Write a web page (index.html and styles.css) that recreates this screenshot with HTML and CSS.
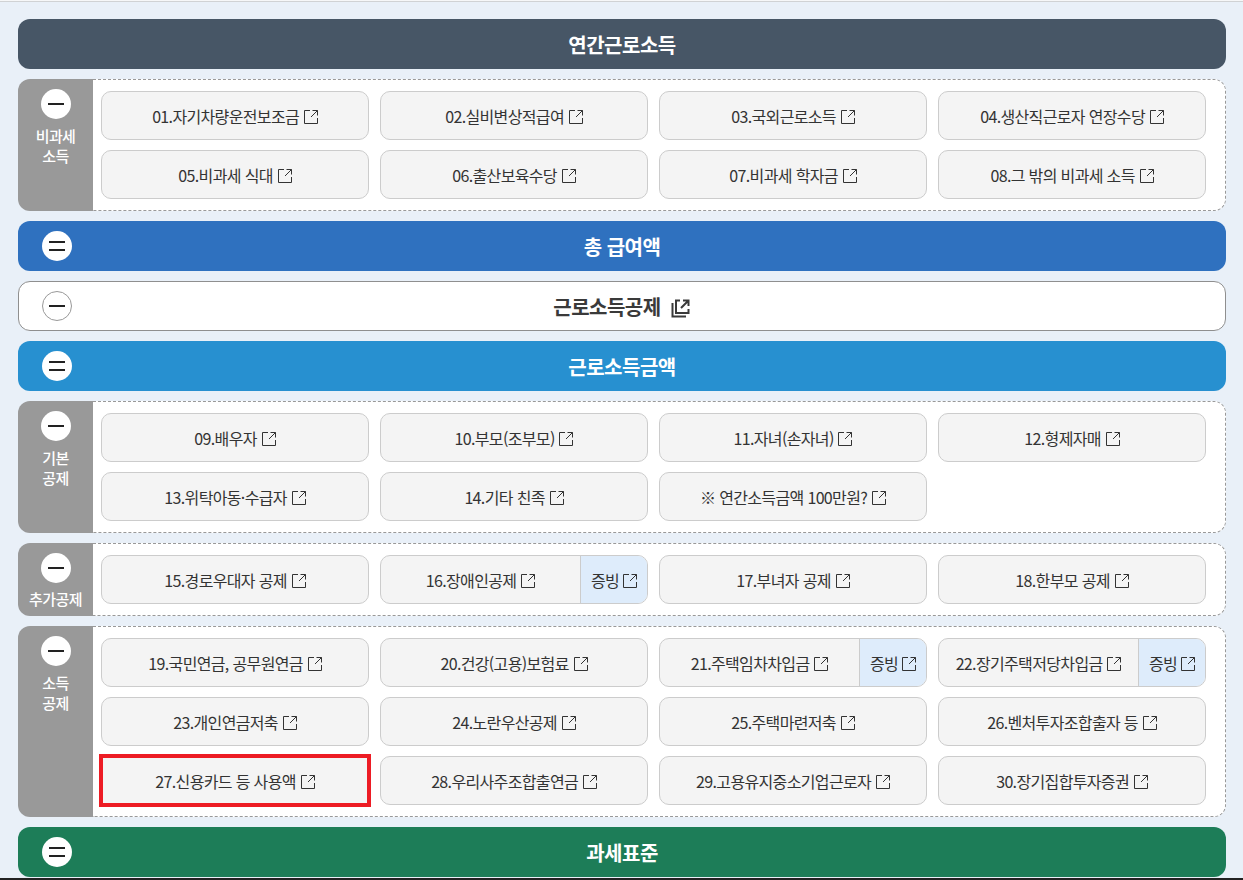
FILE: index.html
```html
<!DOCTYPE html>
<html lang="ko">
<head>
<meta charset="utf-8">
<title>연간근로소득</title>
<link rel="stylesheet" href="styles.css">
</head>
<body>
<svg class="defs" width="0" height="0" aria-hidden="true">
  <symbol id="ext" viewBox="0 0 14 14">
    <path d="M6 .5H.5V13.5H13.5V8M8.5 .5H13.5V5.5M13.5 .5L7 7" fill="none" stroke="currentColor" stroke-width="1"/>
  </symbol>
</svg>
<main class="page">
  <div class="bar bar-slate"><span class="bar-title">연간근로소득</span></div>

  <section class="box">
    <div class="side"><span class="circle minus"></span><span class="side-label">비과세<br>소득</span></div>
    <div class="grid">
      <a class="btn"><span class="lbl">01.자기차량운전보조금 <svg class="ico"><use href="#ext"/></svg></span></a>
      <a class="btn"><span class="lbl">02.실비변상적급여 <svg class="ico"><use href="#ext"/></svg></span></a>
      <a class="btn"><span class="lbl">03.국외근로소득 <svg class="ico"><use href="#ext"/></svg></span></a>
      <a class="btn"><span class="lbl">04.생산직근로자 연장수당 <svg class="ico"><use href="#ext"/></svg></span></a>
      <a class="btn"><span class="lbl">05.비과세 식대 <svg class="ico"><use href="#ext"/></svg></span></a>
      <a class="btn"><span class="lbl">06.출산보육수당 <svg class="ico"><use href="#ext"/></svg></span></a>
      <a class="btn"><span class="lbl">07.비과세 학자금 <svg class="ico"><use href="#ext"/></svg></span></a>
      <a class="btn"><span class="lbl">08.그 밖의 비과세 소득 <svg class="ico"><use href="#ext"/></svg></span></a>
    </div>
  </section>

  <div class="bar bar-blue"><span class="circle equal"></span><span class="bar-title">총 급여액</span></div>

  <div class="bar bar-white"><span class="circle minus outlined"></span><span class="bar-title">근로소득공제 <svg class="ico-bold" viewBox="0 0 20 20"><path d="M1.5 5V18.5H15" fill="none" stroke="currentColor" stroke-width="2"/><path d="M9 2.5H5V15H17.5V11M12 2.5H17.5V8M17.5 2.5L10 10" fill="none" stroke="currentColor" stroke-width="2"/></svg></span></div>

  <div class="bar bar-sky"><span class="circle equal"></span><span class="bar-title">근로소득금액</span></div>

  <section class="box">
    <div class="side"><span class="circle minus"></span><span class="side-label">기본<br>공제</span></div>
    <div class="grid">
      <a class="btn"><span class="lbl">09.배우자 <svg class="ico"><use href="#ext"/></svg></span></a>
      <a class="btn"><span class="lbl">10.부모(조부모) <svg class="ico"><use href="#ext"/></svg></span></a>
      <a class="btn"><span class="lbl">11.자녀(손자녀) <svg class="ico"><use href="#ext"/></svg></span></a>
      <a class="btn"><span class="lbl">12.형제자매 <svg class="ico"><use href="#ext"/></svg></span></a>
      <a class="btn"><span class="lbl">13.위탁아동·수급자 <svg class="ico"><use href="#ext"/></svg></span></a>
      <a class="btn"><span class="lbl">14.기타 친족 <svg class="ico"><use href="#ext"/></svg></span></a>
      <a class="btn"><span class="lbl">※ 연간소득금액 100만원? <svg class="ico"><use href="#ext"/></svg></span></a>
    </div>
  </section>

  <section class="box">
    <div class="side"><span class="circle minus"></span><span class="side-label side-label-single">추가공제</span></div>
    <div class="grid">
      <a class="btn"><span class="lbl">15.경로우대자 공제 <svg class="ico"><use href="#ext"/></svg></span></a>
      <a class="btn"><span class="lbl">16.장애인공제 <svg class="ico"><use href="#ext"/></svg></span><span class="proof">증빙 <svg class="ico"><use href="#ext"/></svg></span></a>
      <a class="btn"><span class="lbl">17.부녀자 공제 <svg class="ico"><use href="#ext"/></svg></span></a>
      <a class="btn"><span class="lbl">18.한부모 공제 <svg class="ico"><use href="#ext"/></svg></span></a>
    </div>
  </section>

  <section class="box">
    <div class="side"><span class="circle minus"></span><span class="side-label">소득<br>공제</span></div>
    <div class="grid">
      <a class="btn"><span class="lbl">19.국민연금, 공무원연금 <svg class="ico"><use href="#ext"/></svg></span></a>
      <a class="btn"><span class="lbl">20.건강(고용)보험료 <svg class="ico"><use href="#ext"/></svg></span></a>
      <a class="btn"><span class="lbl">21.주택임차차입금 <svg class="ico"><use href="#ext"/></svg></span><span class="proof">증빙 <svg class="ico"><use href="#ext"/></svg></span></a>
      <a class="btn"><span class="lbl">22.장기주택저당차입금 <svg class="ico"><use href="#ext"/></svg></span><span class="proof">증빙 <svg class="ico"><use href="#ext"/></svg></span></a>
      <a class="btn"><span class="lbl">23.개인연금저축 <svg class="ico"><use href="#ext"/></svg></span></a>
      <a class="btn"><span class="lbl">24.노란우산공제 <svg class="ico"><use href="#ext"/></svg></span></a>
      <a class="btn"><span class="lbl">25.주택마련저축 <svg class="ico"><use href="#ext"/></svg></span></a>
      <a class="btn"><span class="lbl">26.벤처투자조합출자 등 <svg class="ico"><use href="#ext"/></svg></span></a>
      <a class="btn btn-marked"><span class="lbl">27.신용카드 등 사용액 <svg class="ico"><use href="#ext"/></svg></span></a>
      <a class="btn"><span class="lbl">28.우리사주조합출연금 <svg class="ico"><use href="#ext"/></svg></span></a>
      <a class="btn"><span class="lbl">29.고용유지중소기업근로자 <svg class="ico"><use href="#ext"/></svg></span></a>
      <a class="btn"><span class="lbl">30.장기집합투자증권 <svg class="ico"><use href="#ext"/></svg></span></a>
    </div>
  </section>

  <div class="bar bar-green"><span class="circle equal"></span><span class="bar-title">과세표준</span></div>
</main>
</body>
</html>
```

FILE: styles.css
```css
* { box-sizing: border-box; }
html, body { margin: 0; height: 880px; overflow: hidden; }
body {
  background: #e9f0f8;
  font-family: "Noto Sans CJK KR", "Noto Sans", sans-serif;
  color: #333;
  border-top: 1px solid #f6f7f8;
  border-bottom: 2px solid #222;
}
.defs { position: absolute; }
.page {
  display: flex;
  flex-direction: column;
  gap: 10px;
  border-top: 1px solid #d0d2d4;
  padding: 17px 17px 0 18px;
}
.bar {
  height: 50px;
  border-radius: 12px;
  display: flex;
  align-items: center;
  justify-content: center;
  position: relative;
  color: #fff;
  font-size: 20px;
  font-weight: 700;
  letter-spacing: -0.5px;
}
.bar-slate { background: #475666; }
.bar-blue { background: #2f71bf; }
.bar-sky { background: #2790d0; }
.bar-green { background: #1d7d58; }
.bar-white { background: #fff; border: 1px solid #8f8f8f; color: #3a3a3a; }
.bar .circle { position: absolute; left: 24px; top: 10px; }
.bar-white .circle { left: 23px; top: 9px; }
.bar-title { display: inline-flex; align-items: center; gap: 5px; white-space: pre; }
.ico-bold { width: 20px; height: 20px; margin-top: 3px; }

.circle {
  width: 30px;
  height: 30px;
  border-radius: 50%;
  background: #fff;
  display: block;
  position: relative;
  flex: none;
}
.circle::before, .circle::after {
  content: "";
  position: absolute;
  left: 7px;
  width: 16px;
  height: 2px;
  background: #222;
}
.minus::before { top: 14px; }
.minus::after { display: none; }
.equal::before { top: 10px; }
.equal::after { top: 18px; }
.outlined { border: 1px solid #999; }
.outlined::before { left: 6px; top: 13px; }

.box {
  display: flex;
  border-radius: 12px;
}
.side {
  width: 75px;
  flex: none;
  background: #999;
  border-radius: 12px 0 0 12px;
  display: flex;
  flex-direction: column;
  align-items: center;
  padding-top: 10px;
  color: #fff;
  font-size: 15px;
  font-weight: 500;
  line-height: 20px;
  letter-spacing: -0.6px;
  text-align: center;
}
.side-label { margin-top: 7px; }
.side-label-single { margin-top: 6px; }
.grid {
  flex: 1;
  display: grid;
  grid-template-columns: repeat(4, 268px);
  grid-auto-rows: 49px;
  column-gap: 11px;
  row-gap: 10px;
  padding: 11px 19px 11px 8px;
  background: #fff;
  border: 1px dashed #999;
  border-left: 0;
  border-radius: 0 12px 12px 0;
}
.btn {
  display: flex;
  align-items: stretch;
  background: #f4f4f4;
  border: 1px solid #ccc;
  border-radius: 10px;
  overflow: hidden;
  font-size: 16px;
  letter-spacing: -0.65px;
  color: #333;
}
.btn-marked {
  border-radius: 0;
  overflow: visible;
  outline: 4px solid #ed1c24;
  outline-offset: -2px;
}
.lbl {
  flex: 1;
  display: flex;
  align-items: center;
  justify-content: center;
  gap: 1px;
  white-space: pre;
}
.proof {
  width: 67px;
  flex: none;
  display: flex;
  align-items: center;
  justify-content: center;
  background: #deecfb;
  border-left: 1px solid #ccc;
  white-space: pre;
}
.ico { width: 14px; height: 14px; color: #333; flex: none; margin-top: 3px; }
```
